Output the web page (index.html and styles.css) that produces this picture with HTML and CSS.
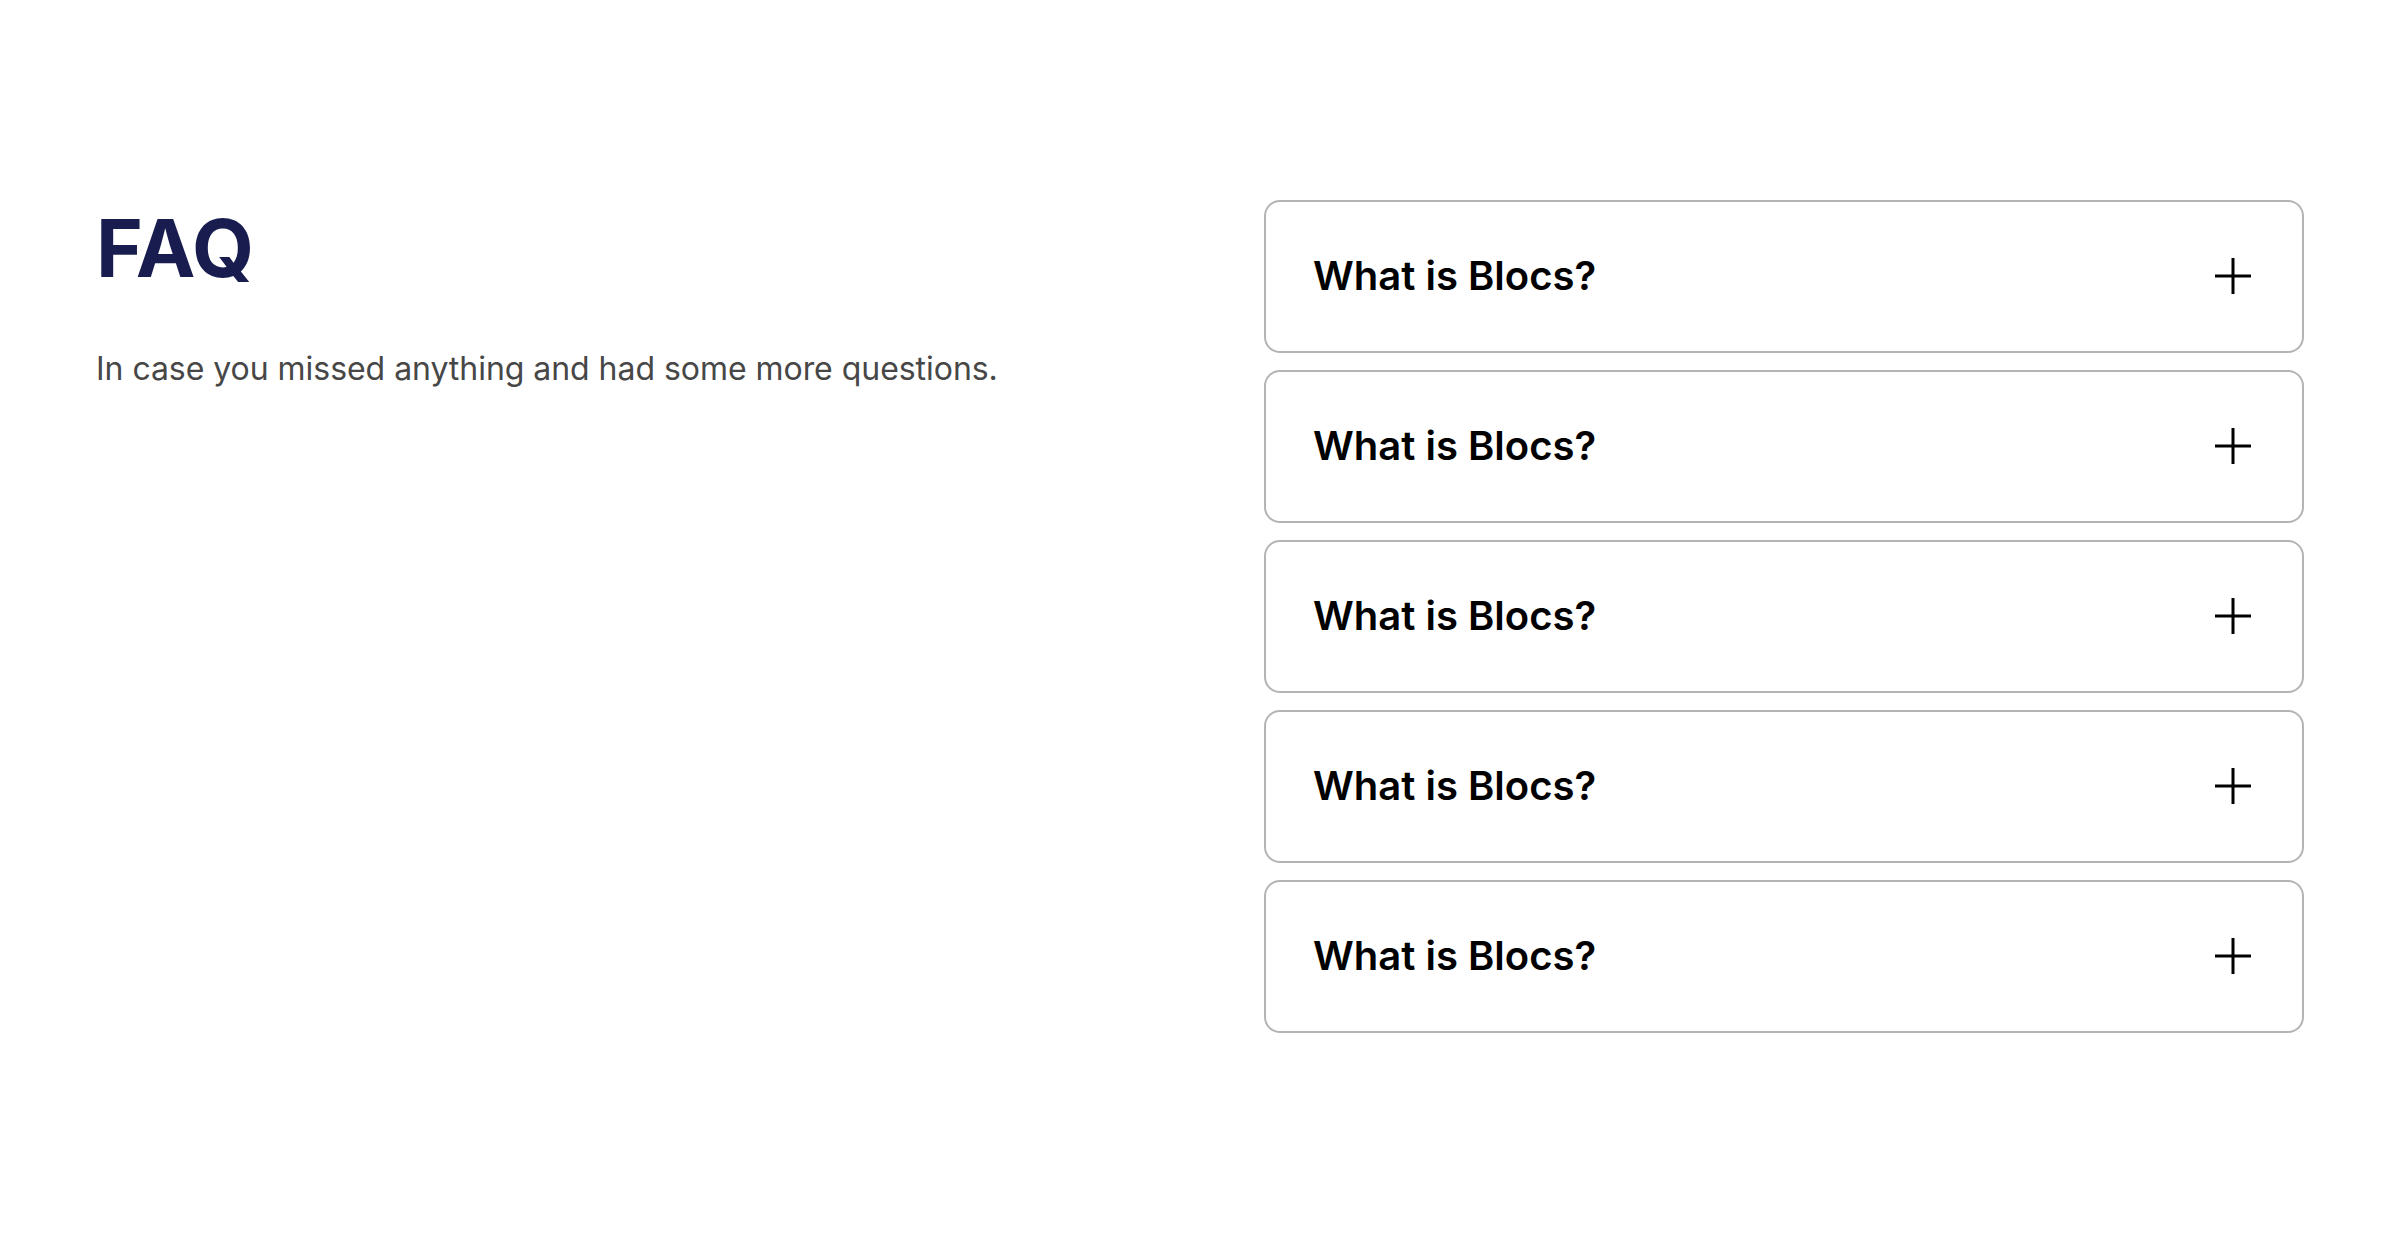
FILE: index.html
```html
<!DOCTYPE html>
<html lang="en">
<head>
<meta charset="utf-8">
<title>FAQ</title>
<link rel="stylesheet" href="styles.css">
</head>
<body>
<section class="faq">
  <div class="faq-intro">
    <h1 class="faq-title">FAQ</h1>
    <p class="faq-sub">In case you missed anything and had some more questions.</p>
  </div>
  <div class="faq-list">
    <div class="faq-item">
      <span class="faq-q">What is Blocs?</span>
      <svg class="faq-icon" viewBox="0 0 48 48" width="48" height="48"><path d="M24 6v36M6 24h36" stroke="#000" stroke-width="3" fill="none"/></svg>
    </div>
    <div class="faq-item">
      <span class="faq-q">What is Blocs?</span>
      <svg class="faq-icon" viewBox="0 0 48 48" width="48" height="48"><path d="M24 6v36M6 24h36" stroke="#000" stroke-width="3" fill="none"/></svg>
    </div>
    <div class="faq-item">
      <span class="faq-q">What is Blocs?</span>
      <svg class="faq-icon" viewBox="0 0 48 48" width="48" height="48"><path d="M24 6v36M6 24h36" stroke="#000" stroke-width="3" fill="none"/></svg>
    </div>
    <div class="faq-item">
      <span class="faq-q">What is Blocs?</span>
      <svg class="faq-icon" viewBox="0 0 48 48" width="48" height="48"><path d="M24 6v36M6 24h36" stroke="#000" stroke-width="3" fill="none"/></svg>
    </div>
    <div class="faq-item">
      <span class="faq-q">What is Blocs?</span>
      <svg class="faq-icon" viewBox="0 0 48 48" width="48" height="48"><path d="M24 6v36M6 24h36" stroke="#000" stroke-width="3" fill="none"/></svg>
    </div>
  </div>
</section>
</body>
</html>
```

FILE: styles.css
```css
* { box-sizing: border-box; }
html, body {
  margin: 0;
  padding: 0;
  background: #fff;
  font-family: Inter, "Noto Sans", "Liberation Sans", sans-serif;
}
.faq {
  display: grid;
  grid-template-columns: 1fr 1040px;
  column-gap: 128px;
  padding: 200px 96px 0 96px;
}
.faq-title {
  margin: 0;
  font-size: 80px;
  line-height: 96px;
  font-weight: 700;
  color: #181c4e;
}
.faq-sub {
  margin: 49px 0 0 0;
  font-size: 32px;
  line-height: 48px;
  font-weight: 400;
  letter-spacing: -0.04px;
  color: #474747;
}
.faq-list {
  display: flex;
  flex-direction: column;
  gap: 17px;
}
.faq-item {
  display: flex;
  align-items: center;
  justify-content: space-between;
  border: 2px solid #b4b4b4;
  border-radius: 16px;
  padding: 46px 45px 47px 47px;
}
.faq-q {
  font-size: 40px;
  line-height: 56px;
  font-weight: 600;
  color: #000;
}
.faq-icon {
  display: block;
  flex: none;
}
```
